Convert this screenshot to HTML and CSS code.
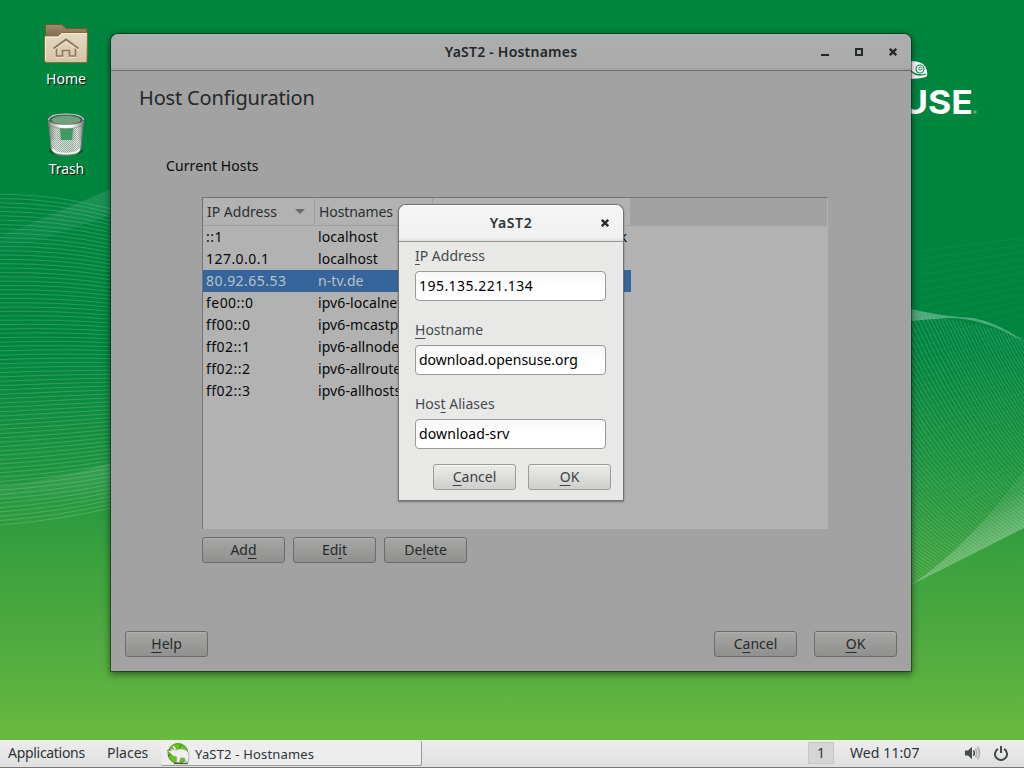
FILE: index.html
```html
<!DOCTYPE html>
<html lang="en">
<head>
<meta charset="utf-8">
<title>YaST2 - Hostnames</title>
<link rel="stylesheet" href="styles.css">
</head>
<body>
<div class="desktop">
  <svg class="wallpaper" width="1024" height="740" viewBox="0 0 1024 740" aria-hidden="true">
    <defs>
      <linearGradient id="sky" x1="0" y1="0" x2="0" y2="1">
        <stop offset="0" stop-color="#00853f"/>
        <stop offset=".47" stop-color="#00853f"/>
        <stop offset=".62" stop-color="#1b923f"/>
        <stop offset=".74" stop-color="#38a03f"/>
        <stop offset=".87" stop-color="#50ab3f"/>
        <stop offset="1" stop-color="#6ab93f"/>
      </linearGradient>
      <linearGradient id="fan" gradientUnits="userSpaceOnUse" x1="1000" y1="500" x2="1020" y2="535">
        <stop offset="0" stop-color="#fff" stop-opacity=".06"/>
        <stop offset="1" stop-color="#fff" stop-opacity=".28"/>
      </linearGradient>
      <linearGradient id="veil" x1="0" y1="0" x2="0" y2="1">
        <stop offset="0" stop-color="#fff" stop-opacity=".12"/>
        <stop offset="1" stop-color="#fff" stop-opacity="0"/>
      </linearGradient>
    </defs>
    <rect width="1024" height="740" fill="url(#sky)"/>
    <path d="M0 237Q50 215 111 189V215Q50 235 0 255Z" fill="url(#veil)"/>
    <path d="M0 487Q60 478 111 463V505Q60 500 0 500Z" fill="url(#veil)"/>
    <g id="waves" fill="none" stroke="#fff"></g>
    <path d="M911 309Q940 316 973 318Q1000 323 1024 342Q985 318 948 318Q930 319 911 321Z" fill="#fff" opacity=".3"/>
    <path d="M911 585Q970 545 1024 470V528Z" fill="url(#fan)"/>
    <g class="brand">
      <path d="M905 61.500Q916 60 923 64Q928 69 927 76Q924 79 905 79Z" fill="#fff"/>
      <circle cx="920" cy="69" r="4" fill="#fff" stroke="#00853f" stroke-width="1.1"/>
      <circle cx="920.5" cy="68.5" r="1.5" fill="none" stroke="#00853f"/>
      <path d="M911 71Q917 77 926 74" fill="none" stroke="#00853f" stroke-width="1.3"/>
      <text class="brand-name" x="902" y="114" textLength="71" lengthAdjust="spacingAndGlyphs">USE</text>
      <circle cx="975" cy="112" r="1.2" fill="none" stroke="#fff" stroke-width=".6" opacity=".7"/>
    </g>
  </svg>

  <div class="shortcut shortcut-home">
    <svg width="46" height="42" viewBox="0 0 46 42">
      <defs>
        <linearGradient id="fb" x1="0" y1="0" x2="0" y2="1"><stop offset="0" stop-color="#9f8c6e"/><stop offset="1" stop-color="#806c4d"/></linearGradient>
        <linearGradient id="ff" x1="0" y1="0" x2="0" y2="1"><stop offset="0" stop-color="#e6d8c2"/><stop offset="1" stop-color="#d7c4a8"/></linearGradient>
      </defs>
      <path d="M2.500 15V3.500Q2.500 2.500 3.500 2.500H19L23 6.500H43Q44 6.500 44 7.500V15Z" fill="url(#fb)" stroke="#705829"/>
      <path d="M1.500 38.500V15Q1.500 14 2.500 14H15L18.500 10.500H43Q44.500 10.500 44.500 11.500L44 39.500Q44 40.500 43 40.500H3Q1.500 40.500 1.500 38.500Z" fill="url(#ff)" stroke="#8b6c32"/>
      <path d="M2.600 38V15.100H15.500L19 11.600H43.400" fill="none" stroke="#f5ecdc"/>
      <path d="M10.500 26.500L23 17.500L35.500 26.500" fill="none" stroke="#8d7957" stroke-width="2"/>
      <path d="M13.500 26.500V34H19.500V28.500H26.500V34H32.500V26.500" fill="none" stroke="#8d7957" stroke-width="1.600"/>
      <path d="M10 28.500L23 19.500L36 28.500M13 35.500H20.500M26 35.500H33.500" fill="none" stroke="#f4e9d7" stroke-width=".8"/>
    </svg>
    <span class="shortcut-label">Home</span>
  </div>
  <div class="shortcut shortcut-trash">
    <svg width="46" height="46" viewBox="0 0 46 46">
      <defs>
        <linearGradient id="tin" x1="0" x2="1"><stop offset="0" stop-color="#8d918d"/><stop offset=".22" stop-color="#dce0dc"/><stop offset=".38" stop-color="#b2d0bb"/><stop offset=".68" stop-color="#a8c5b1"/><stop offset=".82" stop-color="#e6e8e6"/><stop offset="1" stop-color="#868a86"/></linearGradient>
        <pattern id="mesh" width="2" height="2" patternUnits="userSpaceOnUse"><path d="M0 0H1V1H0ZM1 1H2V2H1Z" fill="#5b705f" opacity=".42"/></pattern>
        <linearGradient id="rim" x1="0" x2="1"><stop offset="0" stop-color="#898b89"/><stop offset=".35" stop-color="#fff"/><stop offset=".65" stop-color="#fff"/><stop offset="1" stop-color="#858785"/></linearGradient>
      </defs>
      <ellipse cx="23" cy="40" rx="17" ry="4.500" fill="#03351c" opacity=".55"/>
      <path d="M5.500 9L8 37Q9 44.500 23 44.500T38 37L40.500 9Z" fill="url(#tin)" stroke="#717571"/>
      <path d="M8 29L9 38Q12 43 23 43T37 38L38 29Z" fill="#e2e4e2" opacity=".6"/>
      <path d="M5.500 9L8 37Q9 44.500 23 44.500T38 37L40.500 9Z" fill="url(#mesh)"/>
      <path d="M17 17H30L29 29H18Z" fill="#20904f" opacity=".75"/>
      <path d="M9 38Q12 42.500 23 42.500T37 38" fill="none" stroke="#f5f5f5" stroke-width="1.500"/>
      <ellipse cx="23" cy="9" rx="18" ry="6" fill="#4b5a50" stroke="#606460"/>
      <ellipse cx="23" cy="9" rx="14.500" ry="4.300" fill="#77ad8a"/>
      <ellipse cx="23" cy="9" rx="14.500" ry="4.300" fill="url(#mesh)"/>
      <path d="M5 9Q5 17.500 23 17.500T41 9Q38 13.500 23 13.500T5 9Z" fill="url(#rim)" stroke="#727572" stroke-width=".5"/>
      <path d="M5.500 9Q7 3 23 3T40.500 9" fill="none" stroke="#d7dad7" stroke-width="1.200"/>
    </svg>
    <span class="shortcut-label">Trash</span>
  </div>

  <section class="window">
    <header class="titlebar">
      <h1 class="title title-main">YaST2 - Hostnames</h1>
      <div class="controls">
        <svg width="8" height="8"><path d="M0 6H8V8H0Z"/></svg>
        <svg width="8" height="8"><path d="M0 0H8V8H0ZM2 2V6H6V2Z" fill-rule="evenodd"/></svg>
        <svg width="8" height="8"><path d="M.8 .8L7.200 7.200M7.200 .8L.8 7.200" class="cross"/></svg>
      </div>
    </header>
    <div class="content">
      <h2 class="heading">Host Configuration</h2>
      <div class="hosts">
        <p class="caption">Current Hosts</p>
        <div class="table">
          <div class="thead">
            <div class="th"><span>IP Address</span><i class="sort"></i></div>
            <div class="th"><span>Hostnames</span></div>
            <div class="th"></div>
            <div class="th-rest"></div>
          </div>
          <div class="row"><span class="ip">::1</span><span>localhost</span><span class="alias">ipv6-loopback</span></div>
          <div class="row"><span class="ip">127.0.0.1</span><span>localhost</span></div>
          <div class="row selected"><span class="ip">80.92.65.53</span><span>n-tv.de</span></div>
          <div class="row"><span class="ip">fe00::0</span><span>ipv6-localnet</span></div>
          <div class="row"><span class="ip">ff00::0</span><span>ipv6-mcastprefix</span></div>
          <div class="row"><span class="ip">ff02::1</span><span>ipv6-allnodes</span></div>
          <div class="row"><span class="ip">ff02::2</span><span>ipv6-allrouters</span></div>
          <div class="row"><span class="ip">ff02::3</span><span>ipv6-allhosts</span></div>
        </div>
        <div class="actions">
          <button class="btn">Ad<u>d</u></button>
          <button class="btn">Ed<u>i</u>t</button>
          <button class="btn">De<u>l</u>ete</button>
        </div>
      </div>
      <footer class="footer">
        <button class="btn"><u>H</u>elp</button>
        <button class="btn push">C<u>a</u>ncel</button>
        <button class="btn"><u>O</u>K</button>
      </footer>
    </div>
  </section>

  <section class="dialog">
    <header class="titlebar">
      <h1 class="title">YaST2</h1>
      <div class="controls">
        <svg width="8" height="8"><path d="M.8 .8L7.200 7.200M7.200 .8L.8 7.200" class="cross"/></svg>
      </div>
    </header>
    <form class="form">
      <label class="field"><span><u>I</u>P Address</span><b class="input address">195.135.221.134</b></label>
      <label class="field"><span><u>H</u>ostname</span><b class="input">download.opensuse.org</b></label>
      <label class="field"><span>Hos<u>t</u> Aliases</span><b class="input alias-input">download-srv</b></label>
      <div class="buttons">
        <button type="button" class="btn"><u>C</u>ancel</button>
        <button type="button" class="btn"><u>O</u>K</button>
      </div>
    </form>
  </section>

  <nav class="panel">
    <span class="menu menu-apps">Applications</span>
    <span class="menu menu-places">Places</span>
    <div class="task">
      <svg width="24" height="22" viewBox="0 0 24 22">
        <circle cx="12" cy="10.500" r="10" fill="#65c51d" stroke="#43961a"/>
        <path d="M1 8Q5 5 8 7M2 13Q6 9 11 11M15 2Q12 5 14 8" fill="none" stroke="#318415"/>
        <path d="M4 5.500L10 7Q14 4.500 20 7Q23.500 9 23 13L22.500 19H19.500L18.500 15H14.500L13.500 19.500H10.500L10.500 14Q7 13.500 5 11L2 8Q4 7 5.500 8Z" fill="#f0f1ef" stroke="#999d95" stroke-width=".8"/>
        <path d="M7 3L9.500 6.500" stroke="#f0f1ef" stroke-width="1.500"/>
        <path d="M8 20.500H22" stroke="#4d5c40" stroke-width="1.300"/>
      </svg>
      <span>YaST2 - Hostnames</span>
    </div>
    <span class="workspace">1</span>
    <span class="clock">Wed 11:07</span>
    <svg class="tray" width="16" height="14" viewBox="0 0 16 14">
      <path d="M0 4.500H3L7 .8V13.200L3 9.500H0Z" fill="#454b4c"/>
      <path d="M8.500 4.300Q10.200 7 8.500 9.700" fill="none" stroke="#454b4c" stroke-width="1.500"/>
      <path d="M10.500 2.500Q13 7 10.500 11.500M12.500 .8Q16.500 7 12.500 13.200" fill="none" stroke="#aeb1b1" stroke-width="1.600"/>
    </svg>
    <svg class="power" width="14" height="15" viewBox="0 0 14 15">
      <path d="M4 2.900A6 6 0 1 0 10 2.900M7 0V7" fill="none" stroke="#454b4c" stroke-width="2"/>
    </svg>
  </nav>
</div>
<script src="waves.js"></script>
</body>
</html>
```

FILE: styles.css
```css
* { box-sizing: border-box; }
body { margin: 0; overflow: hidden; }
.desktop {
  position: relative;
  width: 1024px;
  height: 768px;
  font: 14px/20px "Noto Sans", "Open Sans", sans-serif;
  color: #2e3436;
}
h1, h2, p { margin: 0; }
svg { display: block; }
u { text-decoration: underline; text-decoration-thickness: 1px; text-underline-offset: 3px; text-decoration-skip-ink: none; }
.wallpaper { position: absolute; left: 0; top: 0; }
.brand-name { font: 700 33px Inter, sans-serif; fill: #fff; }

.shortcut {
  position: absolute;
  left: 26px;
  width: 80px;
  display: flex;
  flex-direction: column;
  align-items: center;
}
.shortcut-home { top: 22px; gap: 5px; }
.shortcut-trash { top: 111px; gap: 2px; }
.shortcut-label { color: #fff; text-shadow: 1px 1px 1px #000; }
.shortcut-trash .shortcut-label { padding-left: 1px; letter-spacing: -.1px; }

.window {
  position: absolute;
  left: 111px;
  top: 34px;
  width: 800px;
  height: 637px;
  display: flex;
  flex-direction: column;
  background: #a2a2a2;
  border-radius: 7px 7px 0 0;
  box-shadow: 0 0 0 1px rgba(0, 30, 10, .45), 0 2px 7px 1px rgba(0, 0, 0, .5);
  color: #23282a;
}
.titlebar {
  height: 37px;
  flex: none;
  display: grid;
  grid-template-columns: 1fr auto 1fr;
  align-items: center;
  border-radius: 7px 7px 0 0;
}
.window .titlebar { background: linear-gradient(#aeaeae, #aaaaaa 92%, #a0a0a0 97%); border-bottom: 1px solid #6d6d6b; }
.title { grid-column: 2; font-size: 14px; font-weight: 600; line-height: 20px; letter-spacing: .6px; }
.title-main { letter-spacing: .22px; }
.controls { display: flex; justify-content: flex-end; gap: 26px; padding-right: 14px; fill: #23282a; }
.cross { stroke: #23282a; stroke-width: 2.3; fill: none; }
.content { flex: 1; display: flex; flex-direction: column; padding: 13px 14px; }
.heading { font-size: 20px; line-height: 28px; font-weight: 400; margin-left: 14px; letter-spacing: -.16px; }
.hosts { padding: 44px 0 0 41px; }
.caption { color: #0a0a0a; line-height: 20px; letter-spacing: .1px; }
.table {
  width: 626px;
  height: 332px;
  margin: 21px 0 0 36px;
  background: #b2b2b2;
  border: solid #747474;
  border-width: 1px 0 0 1px;
  color: #080808;
  overflow: hidden;
}
.thead { display: flex; height: 28px; color: #2b2f31; }
.th { display: flex; align-items: center; justify-content: space-between; padding: 0 9px 0 4px; border: solid #a0a0a0; border-width: 0 1px 1px 0; }
.th:nth-child(1) { width: 112px; }
.th:nth-child(2) { width: 118px; letter-spacing: -.1px; }
.th:nth-child(3) { width: 197px; border-right: 0; }
.th-rest { flex: 1; background: #a2a2a2; margin-right: 1px; }
.sort { border: 5px solid transparent; border-top-color: #696b6b; border-bottom: 0; }
.row { display: grid; grid-template-columns: 112px 115px 1fr; width: 428px; height: 22px; line-height: 21px; padding-left: 3px; white-space: nowrap; letter-spacing: .08px; }
.ip { letter-spacing: .46px; }
.alias { text-align: right; padding-right: 4px; }
.selected { background: #35659a; color: #b9c2cb; }
.actions { display: flex; gap: 8px; margin: 8px 0 0 36px; }
.btn {
  width: 83px;
  height: 26px;
  padding: 0;
  border: 1px solid #9a9c99;
  border-radius: 3px;
  background: linear-gradient(#ebebea, #cececc);
  box-shadow: inset 0 1px #f5f5f4;
  font: inherit;
  line-height: 22px;
  color: #3b4244;
}
.window .btn { border-color: #6c6d6a; background: linear-gradient(#a6a6a5, #90908e); box-shadow: inset 0 1px #b0b0af; color: #262b2d; }
.footer { display: flex; margin-top: auto; padding-bottom: 1px; }
.footer .push { margin-left: auto; margin-right: 17px; }

.dialog {
  position: absolute;
  left: 399px;
  top: 205px;
  width: 224px;
  height: 295px;
  background: #e8e8e6;
  border-radius: 7px 7px 0 0;
  box-shadow: 0 0 0 1px #747474, 0 1px 2px 1px rgba(0, 0, 0, .35);
  color: #444b4e;
}
.dialog .titlebar { background: linear-gradient(#fff, #f5f5f5 5%, #f1f1f1 90%, #dededd); border-bottom: 1px solid #979795; color: #2e3436; }
.form { padding: 4px 12px 0 16px; }
.field { display: block; height: 74px; }
.field span { display: block; height: 25px; line-height: 20px; }
.input {
  display: block;
  width: 191px;
  height: 30px;
  padding-left: 3px;
  border: 1px solid #999b97;
  border-radius: 4px;
  background: linear-gradient(#f7f7f7, #fff 50%);
  font-weight: 400;
  line-height: 27px;
  color: #000;
}
.address { letter-spacing: .46px; }
.alias-input { letter-spacing: .12px; }
.buttons { display: flex; justify-content: flex-end; gap: 12px; margin-top: -4px; }

.panel {
  position: absolute;
  left: 0;
  top: 740px;
  width: 1024px;
  height: 28px;
  display: flex;
  align-items: center;
  padding: 0 16px 1px 8px;
  background: linear-gradient(#ededed, #dfdfdf);
  border-bottom: 1px solid #777;
  white-space: nowrap;
}
.menu-apps { width: 99px; letter-spacing: -.3px; }
.menu-places { width: 54px; }
.task {
  display: flex;
  align-items: center;
  gap: 5px;
  width: 261px;
  height: 25px;
  padding: 2px 0 0 5px;
  border: solid #999;
  border-width: 0 1px 1px 0;
  border-radius: 2px;
  background: #ededed;
  font-size: 13px;
  letter-spacing: .18px;
}
.workspace { width: 26px; height: 22px; line-height: 20px; margin-left: auto; border: 1px solid #c6c6c6; background: #d5d5d5; text-align: center; }
.clock { width: 131px; padding-left: 16px; letter-spacing: .1px; }
.tray { margin-right: 13px; }
```

FILE: waves.js
```js
// Draws the thin line families that make up the wallpaper's waves.
const waves = document.getElementById('waves');
function line(d, opacity) {
  const p = document.createElementNS('http://www.w3.org/2000/svg', 'path');
  p.setAttribute('d', d);
  p.setAttribute('stroke-opacity', opacity);
  waves.appendChild(p);
}
const mix = (a, b, t) => a + (b - a) * t;

// Left: nearly level strands, bending down at the top and up at the bottom.
for (let i = 0; i <= 76; i++) {
  const t = i / 76;
  const y0 = mix(194, 525, t);
  const y1 = mix(209, 508, t);
  const c = mix(195, 520, t);
  line(`M0 ${y0}Q60 ${c} 111 ${y1}`, 0.17);
}

// Right: steep strands hanging from the crest and turning up along the fan's edge.
for (let i = 0; i <= 84; i++) {
  const t = i / 84;
  const x0 = mix(1040, 720, t);
  const y0 = t < 0.35 ? mix(352, 316, Math.sqrt(t / 0.35)) : mix(316, 380, (t - 0.35) / 0.65);
  const x1 = mix(1150, 905, t);
  const y1 = 585 - (x1 - 911) * 0.504;
  line(`M${x0} ${y0}Q${mix(x0, x1, 0.46)} ${mix(y0, y1, 0.72)} ${x1} ${y1}`, 0.17);
}

// Faint cross strands.
for (let i = 0; i < 40; i++) {
  line(`M911 ${252 + i * 8}L1024 ${238 + i * 7}`, 0.04);
}
```
